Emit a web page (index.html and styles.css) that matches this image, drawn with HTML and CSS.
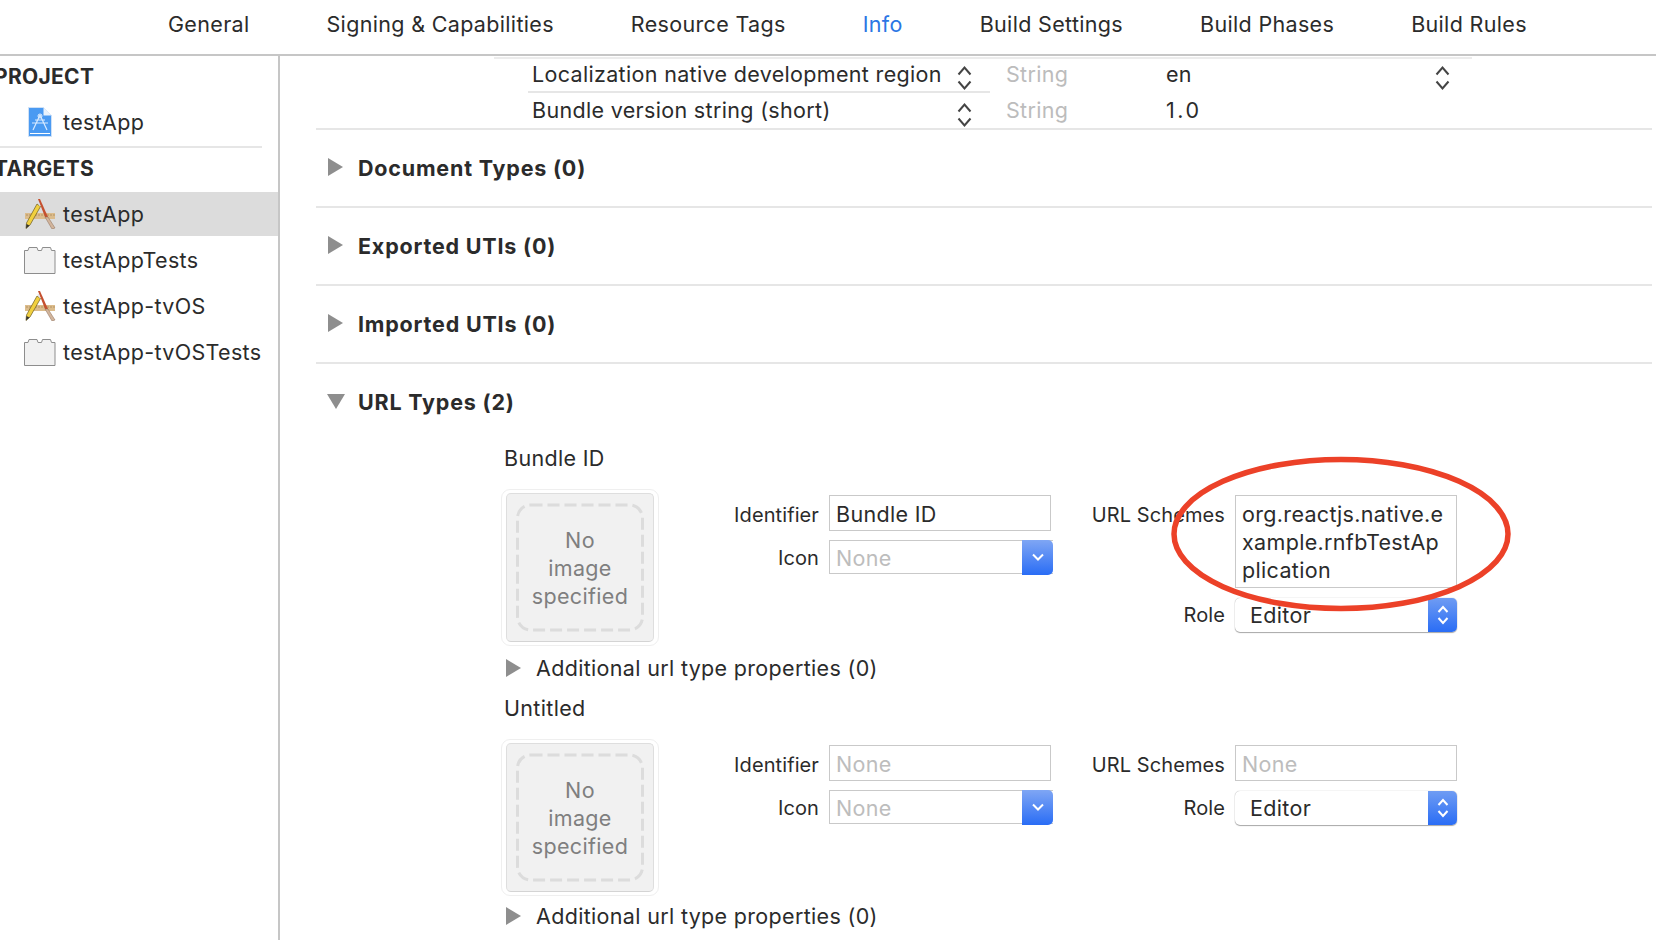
FILE: index.html
```html
<!DOCTYPE html>
<html lang="en">
<head>
<meta charset="utf-8">
<title>testApp</title>
<link rel="stylesheet" href="styles.css">
</head>
<body>
<svg class="defs" width="0" height="0" aria-hidden="true">
  <symbol id="app" viewBox="0 0 32 30">
    <rect x="1" y="14" width="30" height="6" fill="#dcbc8c"/>
    <path d="M3 15v2M6 15v2M9 15v2M12 15v2M15 15v2M18 15v2M21 15v2M24 15v2M27 15v2M30 15v2" stroke="#a98a5c" stroke-width=".8"/>
    <path d="M14 0 L16 0 L24 18 L21 18Z" fill="#c5502f"/>
    <path d="M21 18 L24 18 L31 29 L28 30Z" fill="#d2b59c" stroke="#8a6a55" stroke-width=".5"/>
    <path d="M13 5 L16.500 7.500 L6 26 L2 29.500 L2.500 24Z" fill="#f1d03f" stroke="#6b5a20" stroke-width=".7"/>
    <path d="M2.500 25 L2 29.500 L5.500 26.500Z" fill="#333"/>
    <path d="M14 3 L16 7" stroke="#e2e2e2" stroke-width="1"/>
  </symbol>
  <symbol id="proj" viewBox="0 0 24 30">
    <path d="M.5 .5h15l8 8v21H.5Z" fill="#4a9af2" stroke="#cfe1f6"/>
    <path d="M15.500 .5v8h8Z" fill="#e9f2fc"/>
    <rect x="2" y="26" width="20" height="1" fill="#fff"/>
    <path d="M12 8 L5 23M12 8 L19 23M4 16h16M7 13h10" fill="none" stroke="#d8eaff" stroke-width="1.200"/>
    <circle cx="12" cy="9" r="2" fill="none" stroke="#e4f0ff"/>
  </symbol>
  <symbol id="brick" viewBox="0 0 32 28">
    <path d="M.5 4.500h3.500l1-3h8l1 3h3.500l1-3h8l1 3h3.500v23H.5Z" fill="#f1f1f1" stroke="#8d8d8d"/>
  </symbol>
  <symbol id="updown" viewBox="0 0 15 28">
    <path d="M1.500 10.500 7.500 3.500l6 7M1.500 17.500l6 7 6-7" fill="none" stroke="#444" stroke-width="2"/>
  </symbol>
  <symbol id="updown-w" viewBox="0 0 14 26">
    <path d="M2.500 10 7 5l4.500 5M2.500 16 7 21l4.500-5" fill="none" stroke="#fff" stroke-width="2"/>
  </symbol>
  <symbol id="down" viewBox="0 0 14 10">
    <path d="M2 2.500 7 7.500l5-5" fill="none" stroke="#fff" stroke-width="2"/>
  </symbol>
  <symbol id="dash" viewBox="0 0 146 146">
    <rect x="10.500" y="10.500" width="125" height="125" rx="13" fill="none" stroke="#dcdcdc" stroke-width="3" stroke-dasharray="12 5"/>
  </symbol>
</svg>

<header class="tabs">
  <span class="tab">General</span>
  <span class="tab">Signing &amp; Capabilities</span>
  <span class="tab">Resource Tags</span>
  <span class="tab tab-active">Info</span>
  <span class="tab">Build Settings</span>
  <span class="tab">Build Phases</span>
  <span class="tab">Build Rules</span>
</header>

<div class="body">
  <aside class="side">
    <div class="side-head">PROJECT</div>
    <div class="side-row side-first"><svg class="ico-proj"><use href="#proj"/></svg>testApp</div>
    <div class="side-sep"></div>
    <div class="side-head side-head-2">TARGETS</div>
    <div class="side-row side-sel"><svg class="ico"><use href="#app"/></svg>testApp</div>
    <div class="side-row"><svg class="ico"><use href="#brick"/></svg>testAppTests</div>
    <div class="side-row"><svg class="ico"><use href="#app"/></svg>testApp-tvOS</div>
    <div class="side-row"><svg class="ico"><use href="#brick"/></svg>testApp-tvOSTests</div>
  </aside>

  <main class="main">
    <div class="top-line"></div>
    <div class="plist">
      <div class="prow">
        <div class="pname pname-sep">Localization native development region<svg class="ud"><use href="#updown"/></svg></div>
        <div class="ptype">String</div>
        <div class="pval">en</div>
        <svg class="ud"><use href="#updown"/></svg>
      </div>
      <div class="prow">
        <div class="pname">Bundle version string (short)<svg class="ud ud-low"><use href="#updown"/></svg></div>
        <div class="ptype">String</div>
        <div class="pval pval-num">1.0</div>
      </div>
    </div>

    <div class="section"><i class="tri"></i>Document Types (0)</div>
    <div class="section"><i class="tri"></i>Exported UTIs (0)</div>
    <div class="section"><i class="tri"></i>Imported UTIs (0)</div>
    <div class="section section-open"><i class="tri tri-down"></i>URL Types (2)</div>

    <section class="item">
      <div class="item-title">Bundle ID</div>
      <div class="item-body">
        <div class="well"><div class="well-in"><svg class="well-dash"><use href="#dash"/></svg>No<br>image<br>specified</div></div>
        <div class="form form-a">
          <label class="lab">Identifier</label>
          <div class="field">Bundle ID</div>
          <label class="lab lab-2">Icon</label>
          <div class="combo"><span class="ph">None</span><span class="combo-btn"><svg class="dn"><use href="#down"/></svg></span></div>
        </div>
        <div class="form form-b">
          <label class="lab">URL Schemes</label>
          <div class="field field-multi">org.reactjs.native.e<br>xample.rnfbTestAp<br>plication</div>
          <label class="lab lab-2">Role</label>
          <div class="popup"><span>Editor</span><span class="popup-btn"><svg class="ud-w"><use href="#updown-w"/></svg></span></div>
        </div>
      </div>
      <div class="extra"><i class="tri tri-small"></i>Additional url type properties (0)</div>
    </section>

    <section class="item item-next">
      <div class="item-title">Untitled</div>
      <div class="item-body">
        <div class="well"><div class="well-in"><svg class="well-dash"><use href="#dash"/></svg>No<br>image<br>specified</div></div>
        <div class="form form-a">
          <label class="lab">Identifier</label>
          <div class="field ph">None</div>
          <label class="lab lab-2">Icon</label>
          <div class="combo"><span class="ph">None</span><span class="combo-btn"><svg class="dn"><use href="#down"/></svg></span></div>
        </div>
        <div class="form form-b">
          <label class="lab">URL Schemes</label>
          <div class="field ph">None</div>
          <label class="lab lab-2">Role</label>
          <div class="popup"><span>Editor</span><span class="popup-btn"><svg class="ud-w"><use href="#updown-w"/></svg></span></div>
        </div>
      </div>
      <div class="extra"><i class="tri tri-small"></i>Additional url type properties (0)</div>
    </section>
  </main>
</div>

<svg class="annot" viewBox="0 0 346 160" aria-hidden="true">
  <ellipse cx="173" cy="80" rx="167" ry="74.500" fill="none" stroke="#ec4128" stroke-width="5.500"/>
</svg>
</body>
</html>
```
FILE: styles.css
```css
* { box-sizing: border-box; }
html, body { margin: 0; height: 100%; }
body {
  width: 1656px;
  height: 940px;
  overflow: hidden;
  background: #fff;
  color: #2b2b2b;
  font-family: Inter, "Liberation Sans", sans-serif;
  font-size: 21.5px;
  letter-spacing: .33px;
  position: relative;
}
.defs { position: absolute; }

.tabs {
  height: 56px;
  border-bottom: 2px solid #c6c6c6;
  padding-left: 168px;
  display: flex;
  gap: 77px;
  align-items: center;
  padding-bottom: 6px;
}
.tab-active { color: #2b76e4; }

.body { display: flex; height: 884px; overflow: hidden; }

.side {
  width: 280px;
  flex: none;
  border-right: 2px solid #c6c6c6;
  overflow: hidden;
}
.side-head {
  height: 41px;
  line-height: 42px;
  margin-left: -6px;
  font-weight: 700;
  font-size: 21px;
  letter-spacing: .3px;
}
.side-head-2 { margin-top: 2px; height: 38px; line-height: 38px; }
.side-row {
  height: 44px;
  margin-top: 2px;
  display: flex;
  align-items: center;
  padding-left: 24px;
}
.side-first { margin-top: 3px; }
.side-sep { height: 2px; width: 262px; background: #e6e6e6; margin-top: 2px; }
.side-sel { background: #dcdcdc; margin-top: 4px; }
.ico { width: 32px; height: 30px; margin-right: 7px; flex: none; }
.ico-proj { width: 24px; height: 30px; margin: 0 11px 0 4px; flex: none; }

.main { flex: 1; min-width: 0; padding-left: 36px; padding-right: 4px; overflow: hidden; }
.top-line { height: 2px; background: #ececec; margin: 1px 0 0 178px; width: 978px; }
.plist { padding-left: 212px; border-bottom: 2px solid #e6e6e6; height: 71px; }
.prow { display: flex; height: 36px; align-items: flex-start; }
.pname {
  width: 462px;
  height: 34px;
  line-height: 30px;
  padding-left: 4px;
  padding-right: 18px;
  display: flex;
  justify-content: space-between;
  flex: none;
}
.pname-sep { border-bottom: 2px solid #e6e6e6; }
.ptype { width: 176px; padding-left: 16px; line-height: 30px; color: #bcbcbc; flex: none; }
.pval { width: 269px; line-height: 30px; flex: none; }
.pval-num { letter-spacing: 2.500px; }
.ud { width: 15px; height: 28px; flex: none; margin-top: 5px; }
.ud-low { margin-top: 6px; }

.section {
  height: 78px;
  border-bottom: 2px solid #e6e6e6;
  font-weight: 700;
  letter-spacing: .8px;
  display: flex;
  align-items: center;
  padding-left: 12px;
}
.section-open { border-bottom: 0; height: 74px; padding: 2px 0 0 11px; }
.tri {
  width: 0;
  height: 0;
  flex: none;
  margin-right: 15px;
  margin-bottom: 2px;
  border-left: 15px solid #8e8e8e;
  border-top: 9px solid transparent;
  border-bottom: 9px solid transparent;
}
.tri-down {
  margin-right: 13px;
  border-top: 15px solid #8e8e8e;
  border-left: 9px solid transparent;
  border-right: 9px solid transparent;
  border-bottom: 0;
}
.tri-small { margin: 0 15px 0 0; }

.item { margin: 6px 0 0 188px; }
.item-next { margin-top: 12px; }
.item-title { line-height: 28px; }
.item-body { display: flex; align-items: flex-start; margin: 18px 0 0 -3px; }
.well {
  width: 158px;
  height: 157px;
  flex: none;
  margin-top: -1px;
  padding: 3px 4px;
  border: 1px solid #efefef;
  border-radius: 9px;
}
.well-in {
  position: relative;
  height: 100%;
  background: #f1f1f1;
  border: 1px solid #dedede;
  border-bottom-color: #d4d4d4;
  border-radius: 5px;
  display: flex;
  align-items: center;
  justify-content: center;
  text-align: center;
  color: #7f7f7f;
  line-height: 28px;
}
.well-dash {
  position: absolute;
  inset: 0;
  width: 100%;
  height: 100%;
}
.form { display: grid; column-gap: 10px; margin-top: 5px; flex: none; align-items: start; }
.form-a { width: 394px; grid-template-columns: 160px 224px; row-gap: 9px; }
.form-b { width: 394px; grid-template-columns: 162px 222px; margin-left: 10px; row-gap: 10px; }
.lab {
  text-align: right;
  font-size: 20px;
  letter-spacing: .1px;
  height: 36px;
  line-height: 40px;
}
.lab-2 { height: 34px; line-height: 35px; }
.form-a .lab-2 { line-height: 37px; }
.field {
  border: 1.500px solid #c9c9c9;
  height: 36px;
  line-height: 37px;
  padding-left: 6px;
  width: calc(100% - 2px);
  white-space: nowrap;
}
.form-b .field { width: 100%; }
.field-multi { height: 93px; line-height: 28px; padding-top: 4px; }
.ph { color: #bdbdbd; }
.combo {
  height: 34px;
  display: flex;
  justify-content: space-between;
  line-height: 35px;
  border: 1.500px solid #c9c9c9;
  border-right: 0;
  padding-left: 6px;
}
.combo-btn {
  width: 31px;
  margin: -1.500px 0;
  border-radius: 0 5px 5px 0;
  background: linear-gradient(#7fa6f4, #2a6df5);
  display: flex;
  align-items: center;
  justify-content: center;
}
.dn { width: 14px; height: 10px; }
.popup {
  height: 34px;
  width: 222px;
  display: flex;
  justify-content: space-between;
  line-height: 34px;
  padding-left: 15px;
  border-radius: 5px;
  box-shadow: 0 0 1px #999, 0 1px 1px #aaa;
  background: #fff;
}
.popup-btn {
  width: 29px;
  border-radius: 0 5px 5px 0;
  background: linear-gradient(#6f9cf3, #2a6df5);
  display: flex;
  align-items: center;
  justify-content: center;
}
.ud-w { width: 14px; height: 26px; }
.extra { display: flex; align-items: center; line-height: 28px; margin-top: 8px; padding-left: 2px; }
.item-next .extra { margin-top: 6px; }

.annot {
  position: absolute;
  left: 1168px;
  top: 454px;
  width: 346px;
  height: 160px;
}
```
